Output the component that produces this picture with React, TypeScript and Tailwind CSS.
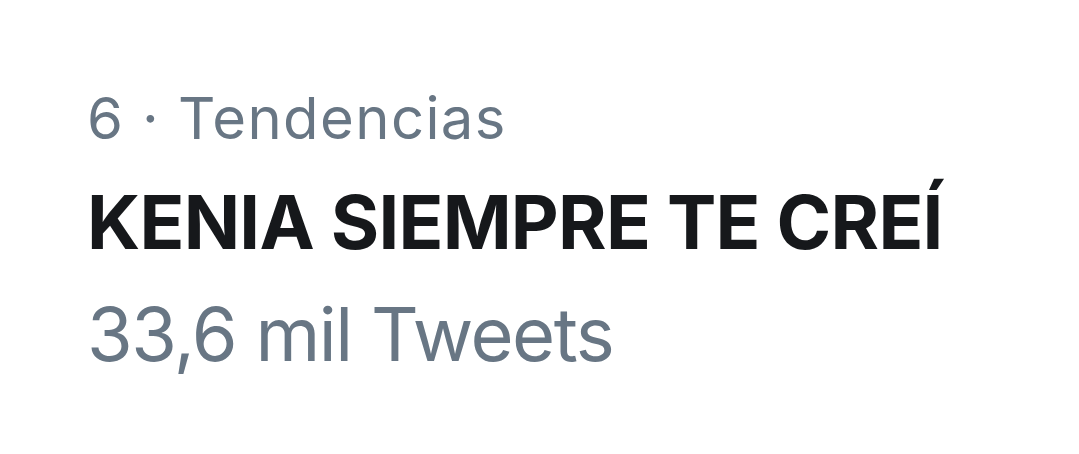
export default function App() {
    return (
        <div className="w-[1079px] h-[454px] bg-white overflow-hidden" style={{ fontFamily: 'Inter, "Noto Sans", sans-serif' }}>
            <div className="flex flex-col pl-[87px] pt-[89px]">
                <div className="text-[58px] leading-none text-[#687684] tracking-[1.4px]">6 · Tendencias</div>
                <div className="mt-[38px] text-[74px] leading-none font-bold text-[#16181b] tracking-[-0.01em]">KENIA SIEMPRE TE CREÍ</div>
                <div className="mt-[38px] text-[74px] leading-none text-[#687684] tracking-[-0.02em]">33,6 mil Tweets</div>
            </div>
        </div>
    )
}
